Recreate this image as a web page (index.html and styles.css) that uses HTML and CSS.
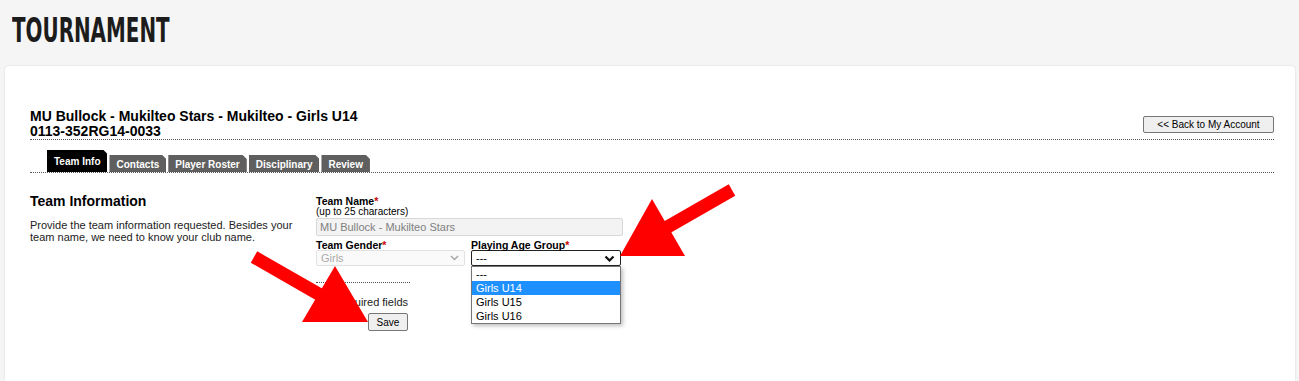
FILE: index.html
```html
<!DOCTYPE html>
<html lang="en">
<head>
  <meta charset="UTF-8" />
  <title>Tournament - Team Info</title>
  <link rel="stylesheet" href="styles.css">
</head>
<body>
  <header class="page-head">
    <h1 class="page-title">TOURNAMENT</h1>
  </header>

  <main class="card">
    <div class="team-head">
      <h2 class="team-name">MU Bullock - Mukilteo Stars - Mukilteo - Girls U14<br>0113-352RG14-0033</h2>
      <button class="btn back-btn">&lt;&lt; Back to My Account</button>
    </div>

    <nav class="tabs">
      <a class="tab active">Team Info</a>
      <a class="tab">Contacts</a>
      <a class="tab">Player Roster</a>
      <a class="tab">Disciplinary</a>
      <a class="tab">Review</a>
    </nav>

    <section class="team-info">
      <div class="info-intro">
        <h3 class="info-title">Team Information</h3>
        <p class="info-text">Provide the team information requested. Besides your team name, we need to know your club name.</p>
      </div>

      <div class="info-form">
        <div class="field">
          <label class="field-label">Team Name<span class="req">*</span></label>
          <div class="field-hint">(up to 25 characters)</div>
          <div class="text-input">MU Bullock - Mukilteo Stars</div>
        </div>

        <div class="field-row">
          <div class="field gender-field">
            <label class="field-label">Team Gender<span class="req">*</span></label>
            <div class="select disabled">
              <span>Girls</span>
              <svg width="9" height="6" viewBox="0 0 9 6"><polyline points="1,1 4.5,4.5 8,1" fill="none" stroke="#a8a8a8" stroke-width="1.5"/></svg>
            </div>
          </div>
          <div class="field age-field">
            <label class="field-label">Playing Age Group<span class="req">*</span></label>
            <div class="select active">
              <span>---</span>
              <svg width="11" height="7" viewBox="0 0 11 7"><polyline points="1.5,1.5 5.5,5.5 9.5,1.5" fill="none" stroke="#111" stroke-width="2.2"/></svg>
            </div>
            <ul class="select-list">
              <li>---</li>
              <li class="selected">Girls U14</li>
              <li>Girls U15</li>
              <li>Girls U16</li>
            </ul>
          </div>
        </div>

        <div class="form-foot">
          <p class="req-note"><span class="req">*</span> Required fields</p>
          <button class="btn save-btn">Save</button>
        </div>
      </div>
    </section>
  </main>

  <!-- annotation arrows drawn over the page -->
  <svg class="arrows" width="1299" height="381" viewBox="0 0 1299 381">
    <line x1="732" y1="190" x2="664" y2="229" stroke="#ff0000" stroke-width="13"/>
    <polygon points="620,256 652,199 685,256" fill="#ff0000"/>
    <line x1="254" y1="257" x2="322" y2="296" stroke="#ff0000" stroke-width="13"/>
    <polygon points="368,322 335,266 302,322" fill="#ff0000"/>
  </svg>
</body>
</html>
```

FILE: styles.css
```css
body {
  margin: 0;
  background: #f5f5f5;
  font-family: "Liberation Sans", Arial, sans-serif;
  color: #000;
  position: relative;
  overflow: hidden;
  height: 381px;
}
.page-head {
  padding: 14px 0 0 12px;
  height: 52px;
}
.page-title {
  margin: 0;
  font-family: "DejaVu Sans Condensed", "DejaVu Sans", sans-serif;
  font-weight: bold;
  font-size: 33px;
  line-height: 33px;
  color: #1c1c1c;
  display: inline-block;
  transform: scaleX(0.67);
  transform-origin: left top;
}
.card {
  margin: 0 4px 0 5px;
  background: #fff;
  border-radius: 4px 4px 0 0;
  box-shadow: 0 0 2px rgba(0,0,0,0.15);
  padding: 43px 21px 0 25px;
  height: 272px;
}

/* heading row */
.team-head {
  display: flex;
  justify-content: space-between;
  align-items: flex-end;
  border-bottom: 1px dotted #555;
}
.team-name {
  margin: 0;
  font-size: 14px;
  line-height: 15px;
  font-weight: bold;
}
.btn {
  font-family: "Liberation Sans", Arial, sans-serif;
  font-size: 10px;
  color: #000;
  background: #efefef;
  border: 1px solid #767676;
  border-radius: 2px;
  padding: 0;
  height: 18px;
}
.back-btn {
  width: 131px;
  height: 17px;
  margin-bottom: 6px;
}

/* tabs */
.tabs {
  display: flex;
  align-items: flex-end;
  gap: 2px;
  margin-top: 10px;
  padding-left: 17px;
  border-bottom: 1px dotted #555;
}
.tab {
  font-size: 10px;
  line-height: 12px;
  font-weight: bold;
  color: #fff;
  background: #5f5f5f;
  padding: 4px 7px 1px;
  clip-path: polygon(0 0, calc(100% - 4px) 0, 100% 4px, 100% 100%, 0 100%);
}
.tab.active {
  background: #000;
  padding: 6px 7px 4px;
}

/* team info section */
.team-info {
  display: flex;
  margin-top: 20px;
}
.info-intro {
  width: 286px;
}
.info-title {
  margin: 0;
  font-size: 14px;
  line-height: 16px;
  font-weight: bold;
}
.info-text {
  margin: 10px 0 0;
  width: 276px;
  font-size: 11px;
  line-height: 12px;
  color: #222;
}
.info-form {
  padding-top: 3px;
}
.field-label {
  display: block;
  font-size: 10.5px;
  line-height: 10px;
  font-weight: bold;
}
.req { color: #c00; }
.field-hint {
  font-size: 10px;
  line-height: 12px;
}
.text-input {
  width: 299px;
  height: 16px;
  border: 1px solid #d8d8d8;
  border-radius: 2px;
  background: #f3f3f3;
  color: #808080;
  font-size: 11px;
  line-height: 16px;
  padding: 0 3px;
}
.field-row {
  display: flex;
  gap: 6px;
  margin-top: 4px;
}
.age-field { position: relative; }
.select {
  box-sizing: border-box;
  height: 16px;
  display: flex;
  align-items: center;
  justify-content: space-between;
  font-size: 11px;
  padding: 0 5px 0 4px;
  border-radius: 2px;
}
.select.disabled {
  width: 149px;
  border: 1px solid #e2e2e2;
  background: #fafafa;
  color: #aaa;
}
.select.active {
  width: 150px;
  border: 1px solid #222;
  background: #fff;
}
.select-list {
  position: absolute;
  left: 0;
  top: 100%;
  z-index: 2;
  box-sizing: border-box;
  width: 150px;
  margin: 0;
  padding: 0;
  list-style: none;
  background: #fff;
  border: 1px solid #767676;
  box-shadow: 2px 2px 4px rgba(0,0,0,0.25);
  font-size: 11px;
}
.select-list li {
  height: 14px;
  line-height: 14px;
  padding-left: 4px;
}
.select-list li.selected {
  background: #1e90ff;
  color: #fff;
}
.form-foot {
  width: 94px;
  margin-top: 16px;
  border-top: 1px dotted #555;
  text-align: right;
}
.req-note {
  margin: 13px 0 0;
  font-size: 11px;
  line-height: 12px;
  padding-right: 2px;
  color: #222;
}
.save-btn {
  width: 40px;
  margin: 5px 2px 0 0;
}

.arrows {
  position: absolute;
  left: 0;
  top: 0;
  pointer-events: none;
}
```
